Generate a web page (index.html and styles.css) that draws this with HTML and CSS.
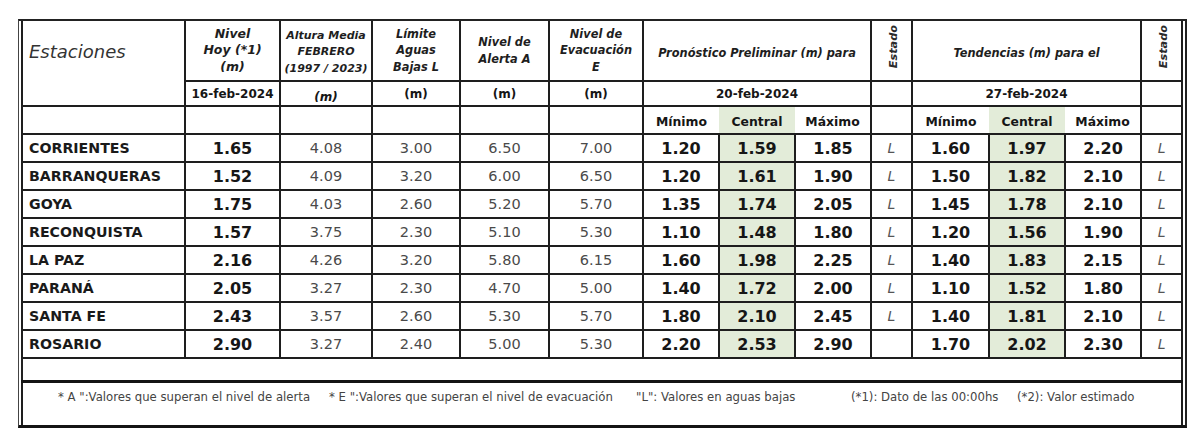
FILE: index.html
```html
<!DOCTYPE html>
<html lang="es">
<head>
<meta charset="utf-8">
<title>Pronóstico de alturas</title>
<link rel="stylesheet" href="styles.css">
</head>
<body>
<div class="sheet">
<table class="grid">
<colgroup>
<col class="w-est"><col class="w-hoy"><col class="w-alt"><col class="w-lim"><col class="w-ale"><col class="w-eva">
<col class="w-v"><col class="w-v"><col class="w-v"><col class="w-st">
<col class="w-v2"><col class="w-v"><col class="w-v"><col class="w-st">
</colgroup>
<thead>
<tr class="h1">
<th rowspan="2" class="est-h">Estaciones</th>
<th class="hh lg">Nivel<br>Hoy (*1)<br>(m)</th>
<th class="hh sm">Altura Media<br>FEBRERO<br>(1997 / 2023)</th>
<th class="hh">Límite<br>Aguas<br>Bajas L</th>
<th class="hh">Nivel de<br>Alerta A</th>
<th class="hh">Nivel de<br>Evacuación<br>E</th>
<th colspan="3" class="hh wide-h">Pronóstico Preliminar (m) para</th>
<th class="vert"><span>Estado</span></th>
<th colspan="3" class="hh wide-h">Tendencias (m) para el</th>
<th class="vert"><span>Estado</span></th>
</tr>
<tr class="h2">
<th class="d">16-feb-2024</th>
<th class="u it">(m)</th>
<th class="u">(m)</th>
<th class="u">(m)</th>
<th class="u">(m)</th>
<th colspan="3" class="d">20-feb-2024</th>
<th></th>
<th colspan="3" class="d">27-feb-2024</th>
<th class="soft"></th>
</tr>
<tr class="h3">
<th></th><th></th><th></th><th></th><th></th><th></th>
<th class="m">Mínimo</th><th class="m g">Central</th><th class="m">Máximo</th><th></th>
<th class="m">Mínimo</th><th class="m g">Central</th><th class="m">Máximo</th><th></th>
</tr>
</thead>
<tbody>
<tr><td class="name">CORRIENTES</td><td class="hoy">1.65</td><td class="ref">4.08</td><td class="ref">3.00</td><td class="ref">6.50</td><td class="ref">7.00</td><td class="val">1.20</td><td class="val g">1.59</td><td class="val">1.85</td><td class="st">L</td><td class="val">1.60</td><td class="val g">1.97</td><td class="val">2.20</td><td class="st">L</td></tr>
<tr><td class="name">BARRANQUERAS</td><td class="hoy">1.52</td><td class="ref">4.09</td><td class="ref">3.20</td><td class="ref">6.00</td><td class="ref">6.50</td><td class="val">1.20</td><td class="val g">1.61</td><td class="val">1.90</td><td class="st">L</td><td class="val">1.50</td><td class="val g">1.82</td><td class="val">2.10</td><td class="st">L</td></tr>
<tr><td class="name">GOYA</td><td class="hoy">1.75</td><td class="ref">4.03</td><td class="ref">2.60</td><td class="ref">5.20</td><td class="ref">5.70</td><td class="val">1.35</td><td class="val g">1.74</td><td class="val">2.05</td><td class="st">L</td><td class="val">1.45</td><td class="val g">1.78</td><td class="val">2.10</td><td class="st">L</td></tr>
<tr><td class="name">RECONQUISTA</td><td class="hoy">1.57</td><td class="ref">3.75</td><td class="ref">2.30</td><td class="ref">5.10</td><td class="ref">5.30</td><td class="val">1.10</td><td class="val g">1.48</td><td class="val">1.80</td><td class="st">L</td><td class="val">1.20</td><td class="val g">1.56</td><td class="val">1.90</td><td class="st">L</td></tr>
<tr><td class="name">LA PAZ</td><td class="hoy">2.16</td><td class="ref">4.26</td><td class="ref">3.20</td><td class="ref">5.80</td><td class="ref">6.15</td><td class="val">1.60</td><td class="val g">1.98</td><td class="val">2.25</td><td class="st">L</td><td class="val">1.40</td><td class="val g">1.83</td><td class="val">2.15</td><td class="st">L</td></tr>
<tr><td class="name">PARANÁ</td><td class="hoy">2.05</td><td class="ref">3.27</td><td class="ref">2.30</td><td class="ref">4.70</td><td class="ref">5.00</td><td class="val">1.40</td><td class="val g">1.72</td><td class="val">2.00</td><td class="st">L</td><td class="val">1.10</td><td class="val g">1.52</td><td class="val">1.80</td><td class="st">L</td></tr>
<tr><td class="name">SANTA FE</td><td class="hoy">2.43</td><td class="ref">3.57</td><td class="ref">2.60</td><td class="ref">5.30</td><td class="ref">5.70</td><td class="val">1.80</td><td class="val g">2.10</td><td class="val">2.45</td><td class="st">L</td><td class="val">1.40</td><td class="val g">1.81</td><td class="val">2.10</td><td class="st">L</td></tr>
<tr><td class="name">ROSARIO</td><td class="hoy">2.90</td><td class="ref">3.27</td><td class="ref">2.40</td><td class="ref">5.00</td><td class="ref">5.30</td><td class="val">2.20</td><td class="val g">2.53</td><td class="val">2.90</td><td class="st"></td><td class="val">1.70</td><td class="val g">2.02</td><td class="val">2.30</td><td class="st">L</td></tr>
<tr class="gap"><td colspan="14"></td></tr>
<tr class="foot"><td colspan="14">
<div class="notes">
<span class="n1">* A ":Valores que superan el nivel de alerta</span>
<span class="n2">* E ":Valores que superan el nivel de evacuación</span>
<span class="n3">"L": Valores en aguas bajas</span>
<span class="n4">(*1): Dato de las 00:00hs</span>
<span>(*2): Valor estimado</span>
</div>
</td></tr>
</tbody>
</table>
</div>
</body>
</html>
```

FILE: styles.css
```css
* { box-sizing: border-box; }
html, body { margin: 0; background: #fff; }
body {
  font-family: "DejaVu Sans", "Liberation Sans", sans-serif;
  color: #161616;
}

.sheet {
  display: inline-block;
  margin: 19px 0 0 18px;
  border-top: 2px solid #222;
  border-bottom: 3px solid #141414;
  border-left: 1px solid #444;
  border-right: 2px solid #222;
  padding: 0 2px;
}

.grid {
  border-collapse: collapse;
  table-layout: fixed;
  width: 1160px;
}

.w-est { width: 163px; }
.w-hoy { width: 95px; }
.w-alt { width: 92px; }
.w-lim { width: 88px; }
.w-ale { width: 89px; }
.w-eva { width: 94px; }
.w-v { width: 76px; }
.w-v2 { width: 77px; }
.w-st { width: 41px; }

.grid th,
.grid td {
  border: 2px solid #1e1e1e;
  padding: 0;
  text-align: center;
  vertical-align: middle;
  overflow: hidden;
  white-space: nowrap;
}

.grid tr:first-child > th { border-top: none; }

/* header rows */
.h1 > th { height: 60px; }
.h2 > th { height: 25px; }
.h3 > th { height: 28px; }

.est-h {
  text-align: left !important;
  vertical-align: top !important;
  padding: 20px 0 0 6px !important;
  font-size: 18px;
  font-style: italic;
  font-weight: normal;
  color: #333;
}

.hh {
  font-size: 11.4px;
  font-style: italic;
  font-weight: bold;
  line-height: 16.5px;
  color: #1e1e1e;
}
.hh.lg { font-size: 12.5px; }
.hh.sm { font-size: 11px; padding-top: 4px !important; }
.hh.wide-h { padding-top: 5px !important; }

.vert span {
  display: inline-block;
  writing-mode: vertical-rl;
  transform: rotate(180deg);
  font-size: 11.3px;
  font-style: italic;
  font-weight: bold;
  color: #2a2a2a;
  margin: 0 0 4px 4px;
}

.d {
  font-size: 12px;
  font-weight: bold;
}
.u {
  font-size: 12px;
  font-weight: bold;
}
.u.it {
  font-style: italic;
  padding-top: 6px !important;
}
.soft { border-top: 1px solid #bbb !important; }

.m {
  font-size: 12.4px;
  font-weight: bold;
  border-left: none !important;
  border-right: none !important;
  padding-top: 2px !important;
}

.g { background: #e3ecd9; }

/* data rows */
tbody tr > td { height: 28px; }

.name {
  text-align: left !important;
  padding-left: 6px !important;
  font-size: 14.2px;
  font-weight: bold;
  color: #1a1a1a;
}
.hoy {
  font-size: 16px;
  font-weight: bold;
}
.ref {
  font-size: 14.5px;
  color: #4a4a4a;
}
.val {
  font-size: 16px;
  font-weight: bold;
}
.st {
  font-size: 14px;
  font-style: italic;
  color: #555;
}

.gap > td {
  height: 23px !important;
  border-left: 2px solid #222;
  border-right: 2px solid #222;
}

.foot > td {
  height: 44px !important;
  border-top: 3px solid #141414;
  border-bottom: none;
  vertical-align: top;
  text-align: left;
}

.notes {
  display: flex;
  padding: 7px 0 0 35px;
  font-size: 11.7px;
  line-height: 14px;
  color: #444;
}
.notes .n1 { width: 271px; }
.notes .n2 { width: 307px; }
.notes .n3 { width: 215px; }
.notes .n4 { width: 166px; }
```
